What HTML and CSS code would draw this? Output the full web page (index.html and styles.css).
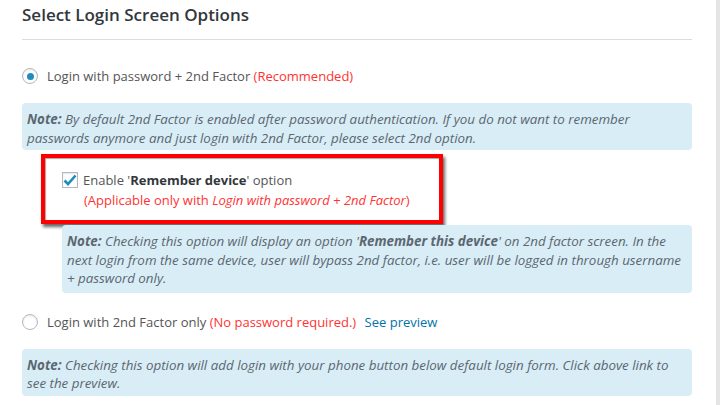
FILE: index.html
```html
<!DOCTYPE html>
<html lang="en">
<head>
    <meta charset="UTF-8">
    <title>Select Login Screen Options</title>
    <link rel="stylesheet" href="styles.css">
</head>
<body>
    <div class="panel">
        <h2 class="title">Select Login Screen Options</h2>
        <hr class="rule">

        <label class="option first">
            <span class="radio checked"></span>
            <span>Login with password + 2nd Factor <span class="warn">(Recommended)</span></span>
        </label>

        <div class="note">
            <b>Note:</b> By default 2nd Factor is enabled after password authentication. If you do not want to remember passwords anymore and just login with 2nd Factor, please select 2nd option.
        </div>

        <div class="remember">
            <div class="check-row">
                <span class="checkbox">
                    <svg width="14" height="12" viewBox="0 0 14 12"><path d="M1.5 6.5 L5 10 L12.5 1.5" fill="none" stroke="#1e8cbe" stroke-width="2.6"/></svg>
                </span>
                <span>Enable '<b>Remember device</b>' option</span>
            </div>
            <div class="applicable">(Applicable only with <i>Login with password + 2nd Factor</i>)</div>
        </div>

        <div class="note sub">
            <b>Note:</b> Checking this option will display an option '<b>Remember this device</b>' on 2nd factor screen. In the next login from the same device, user will bypass 2nd factor, i.e. user will be logged in through username + password only.
        </div>

        <label class="option second">
            <span class="radio"></span>
            <span>Login with 2nd Factor only <span class="warn">(No password required.)</span> <a class="preview" href="#">See preview</a></span>
        </label>

        <div class="note">
            <b>Note:</b> Checking this option will add login with your phone button below default login form. Click above link to see the preview.
        </div>
    </div>
</body>
</html>
```

FILE: styles.css
```css
html, body {
    margin: 0;
    height: 100%;
}
body {
    background-color: #e5e5e5;
    font-family: 'Open Sans', 'Noto Sans', sans-serif;
    color: #555d66;
}
.panel {
    width: 670px;
    height: 100%;
    padding: 0 24px 0 22px;
    background-color: #fff;
    overflow: hidden;
}
.title {
    margin: 0;
    padding-top: 3px;
    font-size: 17px;
    font-weight: 600;
    color: #32373c;
    line-height: 24px;
}
.rule {
    margin: 12px 0 0;
    border: none;
    border-top: 1px solid #dcdcdc;
}
.option {
    display: flex;
    align-items: center;
    font-size: 13px;
    line-height: 18px;
    color: #555;
}
.option.first {
    margin-top: 27px;
}
.option.second {
    margin-top: 20px;
}
.radio {
    flex: none;
    width: 14px;
    height: 14px;
    border: 1px solid #b4b9be;
    border-radius: 50%;
    margin-right: 9px;
    box-shadow: inset 0 1px 2px rgba(0,0,0,0.1);
    display: flex;
    align-items: center;
    justify-content: center;
}
.radio.checked::after {
    content: '';
    width: 7px;
    height: 7px;
    border-radius: 50%;
    background-color: #1e8cbe;
}
.warn {
    color: #ff3333;
}
.preview {
    color: #0073aa;
    text-decoration: none;
    margin-left: 5px;
}
.note {
    margin-top: 18px;
    padding: 7px 6px 3px 5px;
    background-color: #d9edf7;
    border-radius: 4px;
    font-size: 13.35px;
    font-style: italic;
    line-height: 18.5px;
    color: #5b6770;
}
.note b {
    font-weight: 700;
}
.remember {
    width: 402px;
    height: 70px;
    margin: 4px 0 0 19px;
    border: 4px solid #ff0000;
    box-shadow: 2px 3px 3px rgba(0,0,0,0.6), inset 1px 1px 1px rgba(0,0,0,0.35);
    padding-left: 17px;
    box-sizing: border-box;
    font-size: 13px;
    line-height: 18px;
    background-color: #fff;
}
.check-row {
    display: flex;
    align-items: center;
    margin-top: 13px;
    color: #555;
}
.check-row b {
    color: #32373c;
}
.checkbox {
    flex: none;
    width: 14px;
    height: 14px;
    border: 1px solid #b4b9be;
    margin-right: 5px;
    display: flex;
    align-items: center;
    justify-content: center;
    box-shadow: inset 0 1px 2px rgba(0,0,0,0.1);
}
.applicable {
    color: #ff3333;
    margin: 2px 0 0 22px;
}
.note.sub {
    margin: 1px 0 0 40px;
    padding: 7px 6px 5px 5px;
}
```
